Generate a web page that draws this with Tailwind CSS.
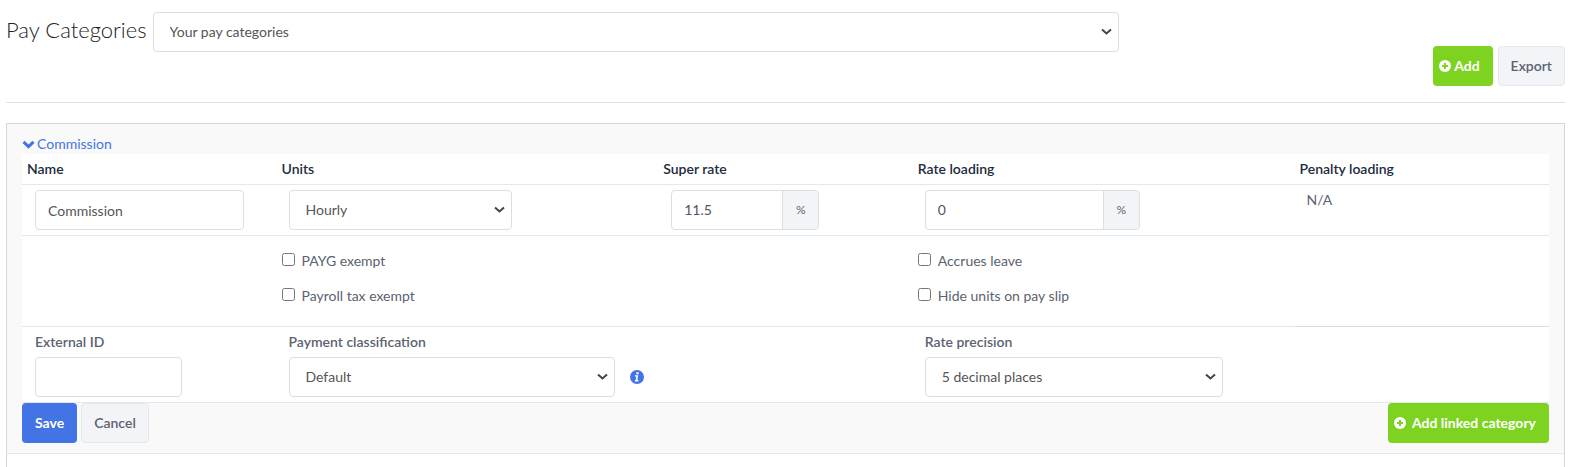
<!DOCTYPE html>
<html lang="en">
<head>
  <meta charset="UTF-8" />
  <meta name="viewport" content="width=device-width, initial-scale=1.0" />
  <title>Pay Categories</title>
  <script src="https://cdn.jsdelivr.net/npm/@tailwindcss/browser@4"></script>
</head>
<body class="flex flex-col min-h-screen pl-[6px] pr-[10px] bg-white font-['Lato',sans-serif] text-sm leading-5 text-[#5b6270]">

  <header class="border-b border-[#dfe2e5] pt-3 pb-4">
    <div class="flex items-start gap-[6px]">
      <h1 class="pt-1 text-[22px] leading-7 font-light text-[#222]"><label for="category-set">Pay Categories</label></h1>
      <div class="relative w-[62%]">
        <select id="category-set" class="block appearance-none w-full h-10 px-4 border border-[#d9e0e2] rounded bg-white text-[#555]">
          <option>Your pay categories</option>
        </select>
        <svg class="absolute right-[7px] top-4 w-[11px] h-2 pointer-events-none" viewBox="0 0 11 8" aria-hidden="true"><path d="M1 1.5l4.5 4 4.5-4" fill="none" stroke="#444" stroke-width="2" /></svg>
      </div>
    </div>
    <div class="flex justify-end gap-[5px] -mt-[6px]">
      <button type="button" class="flex items-center gap-[3px] h-10 pl-[6px] pr-[13px] rounded bg-[#7ed321] text-white font-bold">
        <svg class="size-3" viewBox="0 0 12 12" aria-hidden="true"><circle cx="6" cy="6" r="6" fill="#fff" /><path d="M6 3v6M3 6h6" stroke="#7ed321" stroke-width="2" /></svg>
        Add
      </button>
      <button type="button" class="h-10 px-3 border border-[#e4e7eb] rounded bg-[#f3f4f7] font-semibold">Export</button>
    </div>
  </header>

  <main class="flex flex-col grow mt-5 border border-b-0 border-[#d5d8da]">
    <section class="px-[15px] py-[10px] border-b border-[#e2e8ef] bg-[#f9f9f9]">
      <a href="#" class="flex items-center gap-[2px] text-[#4374e6]">
        <svg class="w-[13px] h-[9px]" viewBox="0 0 13 9" aria-hidden="true"><path d="M1.5 1.8l5 4.8 5-4.8" fill="none" stroke="currentColor" stroke-width="3" /></svg>
        Commission
      </a>

      <table class="table-fixed w-full bg-white text-left border-collapse">
        <colgroup>
          <col class="w-2/12" />
          <col class="w-3/12" />
          <col class="w-2/12" />
          <col class="w-3/12" />
          <col class="w-2/12" />
        </colgroup>
        <thead class="text-[#212b3b]">
          <tr class="border-b border-[#e2e8ef]">
            <th class="p-[5px] font-semibold">Name</th>
            <th class="p-[5px] font-semibold">Units</th>
            <th class="p-[5px] font-semibold">Super rate</th>
            <th class="p-[5px] font-semibold">Rate loading</th>
            <th class="p-[5px] font-semibold">Penalty loading</th>
          </tr>
        </thead>
        <tbody class="align-top">
          <tr class="border-b border-[#e2e8ef]">
            <td class="py-[5px] pl-[13px]">
              <input type="text" aria-label="Name" value="Commission" class="block w-[209px] h-10 px-3 border border-[#d9e0e2] rounded text-[#555]" />
            </td>
            <td class="py-[5px] pl-3">
              <div class="relative w-[223px]">
                <select aria-label="Units" class="block appearance-none w-full h-10 px-4 border border-[#d9e0e2] rounded bg-white text-[#555]">
                  <option>Hourly</option>
                </select>
                <svg class="absolute right-[7px] top-4 w-[11px] h-2 pointer-events-none" viewBox="0 0 11 8" aria-hidden="true"><path d="M1 1.5l4.5 4 4.5-4" fill="none" stroke="#444" stroke-width="2" /></svg>
              </div>
            </td>
            <td class="py-[5px] pl-[13px]">
              <div class="flex w-[148px] h-10 border border-[#d9e0e2] rounded">
                <input type="text" aria-label="Super rate" value="11.5" class="grow min-w-0 px-3 text-[#555]" />
                <span class="flex items-center justify-center w-9 shrink-0 border-l border-[#d9e0e2] rounded-r bg-[#f3f4f7] text-xs">%</span>
              </div>
            </td>
            <td class="py-[5px] pl-3">
              <div class="flex w-[215px] h-10 border border-[#d9e0e2] rounded">
                <input type="text" aria-label="Rate loading" value="0" class="grow min-w-0 px-3 text-[#555]" />
                <span class="flex items-center justify-center w-9 shrink-0 border-l border-[#d9e0e2] rounded-r bg-[#f3f4f7] text-xs">%</span>
              </div>
            </td>
            <td class="py-[5px] pl-3">N/A</td>
          </tr>
          <tr class="border-b border-[#e2e8ef]">
            <td></td>
            <td class="px-[5px] pt-[15px] pb-5">
              <label class="flex gap-[7px] mb-[15px]"><input type="checkbox" class="size-[13px] mt-[2px]" />PAYG exempt</label>
              <label class="flex gap-[7px]"><input type="checkbox" class="size-[13px] mt-[2px]" />Payroll tax exempt</label>
            </td>
            <td></td>
            <td class="px-[5px] pt-[15px] pb-5">
              <label class="flex gap-[7px] mb-[15px]"><input type="checkbox" class="size-[13px] mt-[2px]" />Accrues leave</label>
              <label class="flex gap-[7px]"><input type="checkbox" class="size-[13px] mt-[2px]" />Hide units on pay slip</label>
            </td>
            <td class="border-b border-[#d9dbdb]"></td>
          </tr>
          <tr class="border-b border-[#e2e8ef]">
            <td class="py-[5px] pl-[13px]">
              <label for="external-id" class="block mb-[5px] font-semibold">External ID</label>
              <input id="external-id" type="text" class="block w-[147px] h-10 px-3 border border-[#d9e0e2] rounded text-[#555]" />
            </td>
            <td class="py-[5px] pl-3">
              <label for="classification" class="block mb-[5px] font-semibold">Payment classification</label>
              <div class="flex items-center gap-[15px]">
                <div class="relative w-[326px]">
                  <select id="classification" class="block appearance-none w-full h-10 px-4 border border-[#d9e0e2] rounded bg-white text-[#555]">
                    <option>Default</option>
                  </select>
                  <svg class="absolute right-[7px] top-4 w-[11px] h-2 pointer-events-none" viewBox="0 0 11 8" aria-hidden="true"><path d="M1 1.5l4.5 4 4.5-4" fill="none" stroke="#444" stroke-width="2" /></svg>
                </div>
                <svg class="size-[14px] shrink-0" viewBox="0 0 14 14" role="img" aria-label="Info"><circle cx="7" cy="7" r="7" fill="#4374e6" /><path d="M6.6 2.2h2.2l-.4 2H6.2zM5 5.2h3.2L7.4 10h1.1l-.2 1.4H4.8L5 10h.7l.6-3.4H4.8z" fill="#fff" /></svg>
              </div>
            </td>
            <td></td>
            <td class="py-[5px] pl-3">
              <label for="precision" class="block mb-[5px] font-semibold">Rate precision</label>
              <div class="relative w-[298px]">
                <select id="precision" class="block appearance-none w-full h-10 px-4 border border-[#d9e0e2] rounded bg-white text-[#555]">
                  <option>5 decimal places</option>
                </select>
                <svg class="absolute right-[7px] top-4 w-[11px] h-2 pointer-events-none" viewBox="0 0 11 8" aria-hidden="true"><path d="M1 1.5l4.5 4 4.5-4" fill="none" stroke="#444" stroke-width="2" /></svg>
              </div>
            </td>
            <td></td>
          </tr>
        </tbody>
      </table>

      <div class="flex gap-1">
        <button type="button" class="h-10 px-[13px] rounded bg-[#4374e6] text-white font-bold">Save</button>
        <button type="button" class="h-10 px-3 border border-[#e4e7eb] rounded bg-[#f3f4f7] font-semibold">Cancel</button>
        <button type="button" class="flex items-center gap-[6px] h-10 ml-auto pl-[6px] pr-[13px] rounded bg-[#7ed321] text-white font-bold">
          <svg class="size-3" viewBox="0 0 12 12" aria-hidden="true"><circle cx="6" cy="6" r="6" fill="#fff" /><path d="M6 3v6M3 6h6" stroke="#7ed321" stroke-width="2" /></svg>
          Add linked category
        </button>
      </div>
    </section>
  </main>

</body>
</html>
